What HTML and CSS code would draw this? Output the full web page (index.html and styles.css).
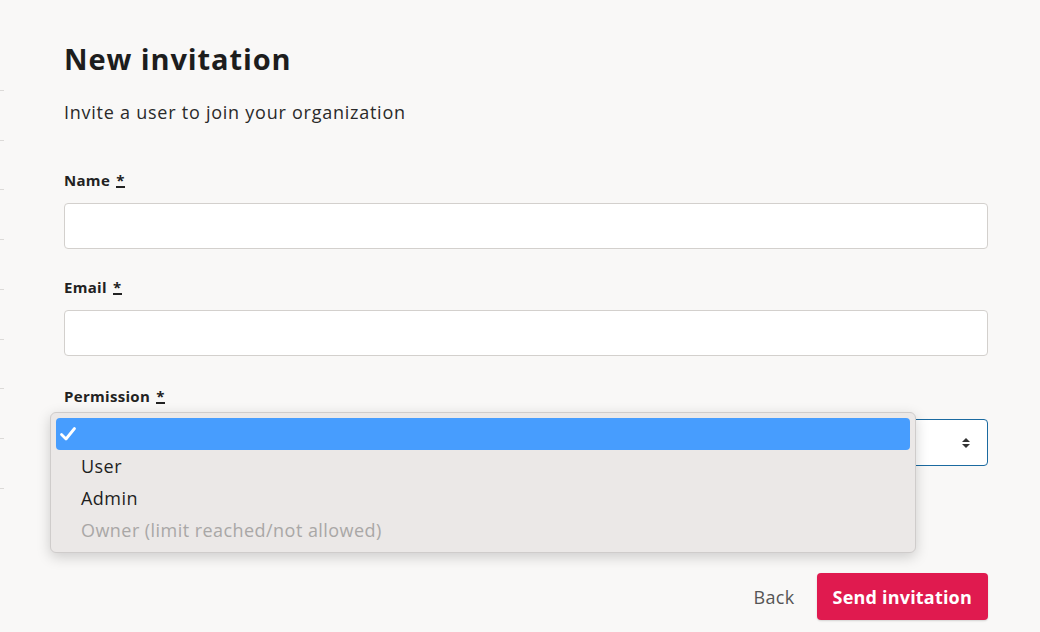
FILE: index.html
```html
<!DOCTYPE html>
<html lang="en">
<head>
<meta charset="utf-8">
<title>New invitation</title>
<link rel="stylesheet" href="styles.css">
</head>
<body>
<div class="edge"></div>
<main class="page">
  <h1 class="title">New invitation</h1>
  <p class="subtitle">Invite a user to join your organization</p>
  <form class="form">
    <div class="field">
      <label class="label">Name <abbr class="req">*</abbr></label>
      <div class="input"></div>
    </div>
    <div class="field">
      <label class="label">Email <abbr class="req">*</abbr></label>
      <div class="input"></div>
    </div>
    <div class="field field-select">
      <label class="label">Permission <abbr class="req">*</abbr></label>
      <div class="select-wrap">
        <div class="input select">
          <svg class="arrows" width="10" height="12" viewBox="0 0 10 12"><path d="M5 1 L9 5 H1 Z M5 11 L1 7 H9 Z" fill="#333"/></svg>
        </div>
        <div class="menu">
          <div class="opt selected"><svg class="check" width="18" height="16" viewBox="0 0 18 16"><path d="M2.5 8.5 L7 13 L15.5 2.5" fill="none" stroke="#fff" stroke-width="2.8" stroke-linecap="round" stroke-linejoin="round"/></svg></div>
          <div class="opt">User</div>
          <div class="opt">Admin</div>
          <div class="opt disabled">Owner (limit reached/not allowed)</div>
        </div>
      </div>
    </div>
    <div class="actions">
      <span class="back">Back</span>
      <span class="btn">Send invitation</span>
    </div>
  </form>
</main>
</body>
</html>
```
FILE: styles.css
```css
* { box-sizing: border-box; }
html, body { margin: 0; height: 100%; }
body {
  background: #f9f8f7;
  font-family: "Open Sans", "Noto Sans", sans-serif;
  color: #1f1f1f;
  position: relative;
  overflow: hidden;
}
.edge {
  position: absolute;
  left: 0;
  top: 90px;
  width: 4px;
  height: 402px;
  background: repeating-linear-gradient(to bottom, #dcdad8 0, #dcdad8 1px, transparent 1px, transparent 49.7px);
}
.page {
  width: 988px;
  padding: 39px 0 0 64px;
}
.title {
  margin: 0;
  font-size: 29px;
  line-height: 40px;
  font-weight: 700;
  letter-spacing: 0.9px;
  color: #1d1d1d;
}
.subtitle {
  margin: 21px 0 0;
  font-size: 18px;
  line-height: 24px;
  letter-spacing: 0.75px;
  color: #2a2a2a;
}
.form { margin-top: 46px; display: flex; flex-direction: column; }
.field { display: flex; flex-direction: column; margin-bottom: 28px; }
.field-select { margin-top: 2px; }
.label {
  font-size: 15px;
  line-height: 20px;
  font-weight: 700;
  color: #222;
  margin-bottom: 13px;
  letter-spacing: 0.3px;
}
.req {
  text-decoration: none;
  border-bottom: 2px solid #222;
  padding-bottom: 0;
  display: inline-block;
  line-height: 12px;
  height: 14px;
  margin-left: 2px;
}
.input {
  height: 46px;
  background: #fff;
  border: 1px solid #d3d0cd;
  border-radius: 4px;
}
.select-wrap { position: relative; }
.select {
  height: 47px;
  border-color: #1b6aa0;
  display: flex;
  align-items: center;
  justify-content: flex-end;
  padding-right: 16px;
}
.menu {
  position: absolute;
  left: -14px;
  top: -7px;
  width: 866px;
  background: #ebe8e7;
  border: 1px solid #cfcccb;
  border-radius: 6px;
  box-shadow: 0 4px 14px rgba(0,0,0,0.18);
  padding: 5px 5px 6px;
}
.opt {
  height: 32px;
  padding-left: 25px;
  font-size: 18px;
  line-height: 32px;
  letter-spacing: 0.45px;
  color: #1e1e1e;
}
.opt.selected {
  background: #479dfe;
  border-radius: 4px;
  padding-left: 3px;
  display: flex;
  align-items: center;
}
.opt.disabled { color: #a9a7a6; }
.actions {
  display: flex;
  justify-content: flex-end;
  align-items: center;
  gap: 22px;
  margin-top: 79px;
}
.back { font-size: 18px; color: #555; letter-spacing: 0.3px; }
.btn {
  background: #e01a4f;
  color: #fff;
  font-weight: 700;
  font-size: 18px;
  letter-spacing: 0.2px;
  height: 47px;
  padding: 0 16px;
  display: flex;
  align-items: center;
  border-radius: 4px;
  box-shadow: 0 1px 2px rgba(0,0,0,0.15);
}
```
